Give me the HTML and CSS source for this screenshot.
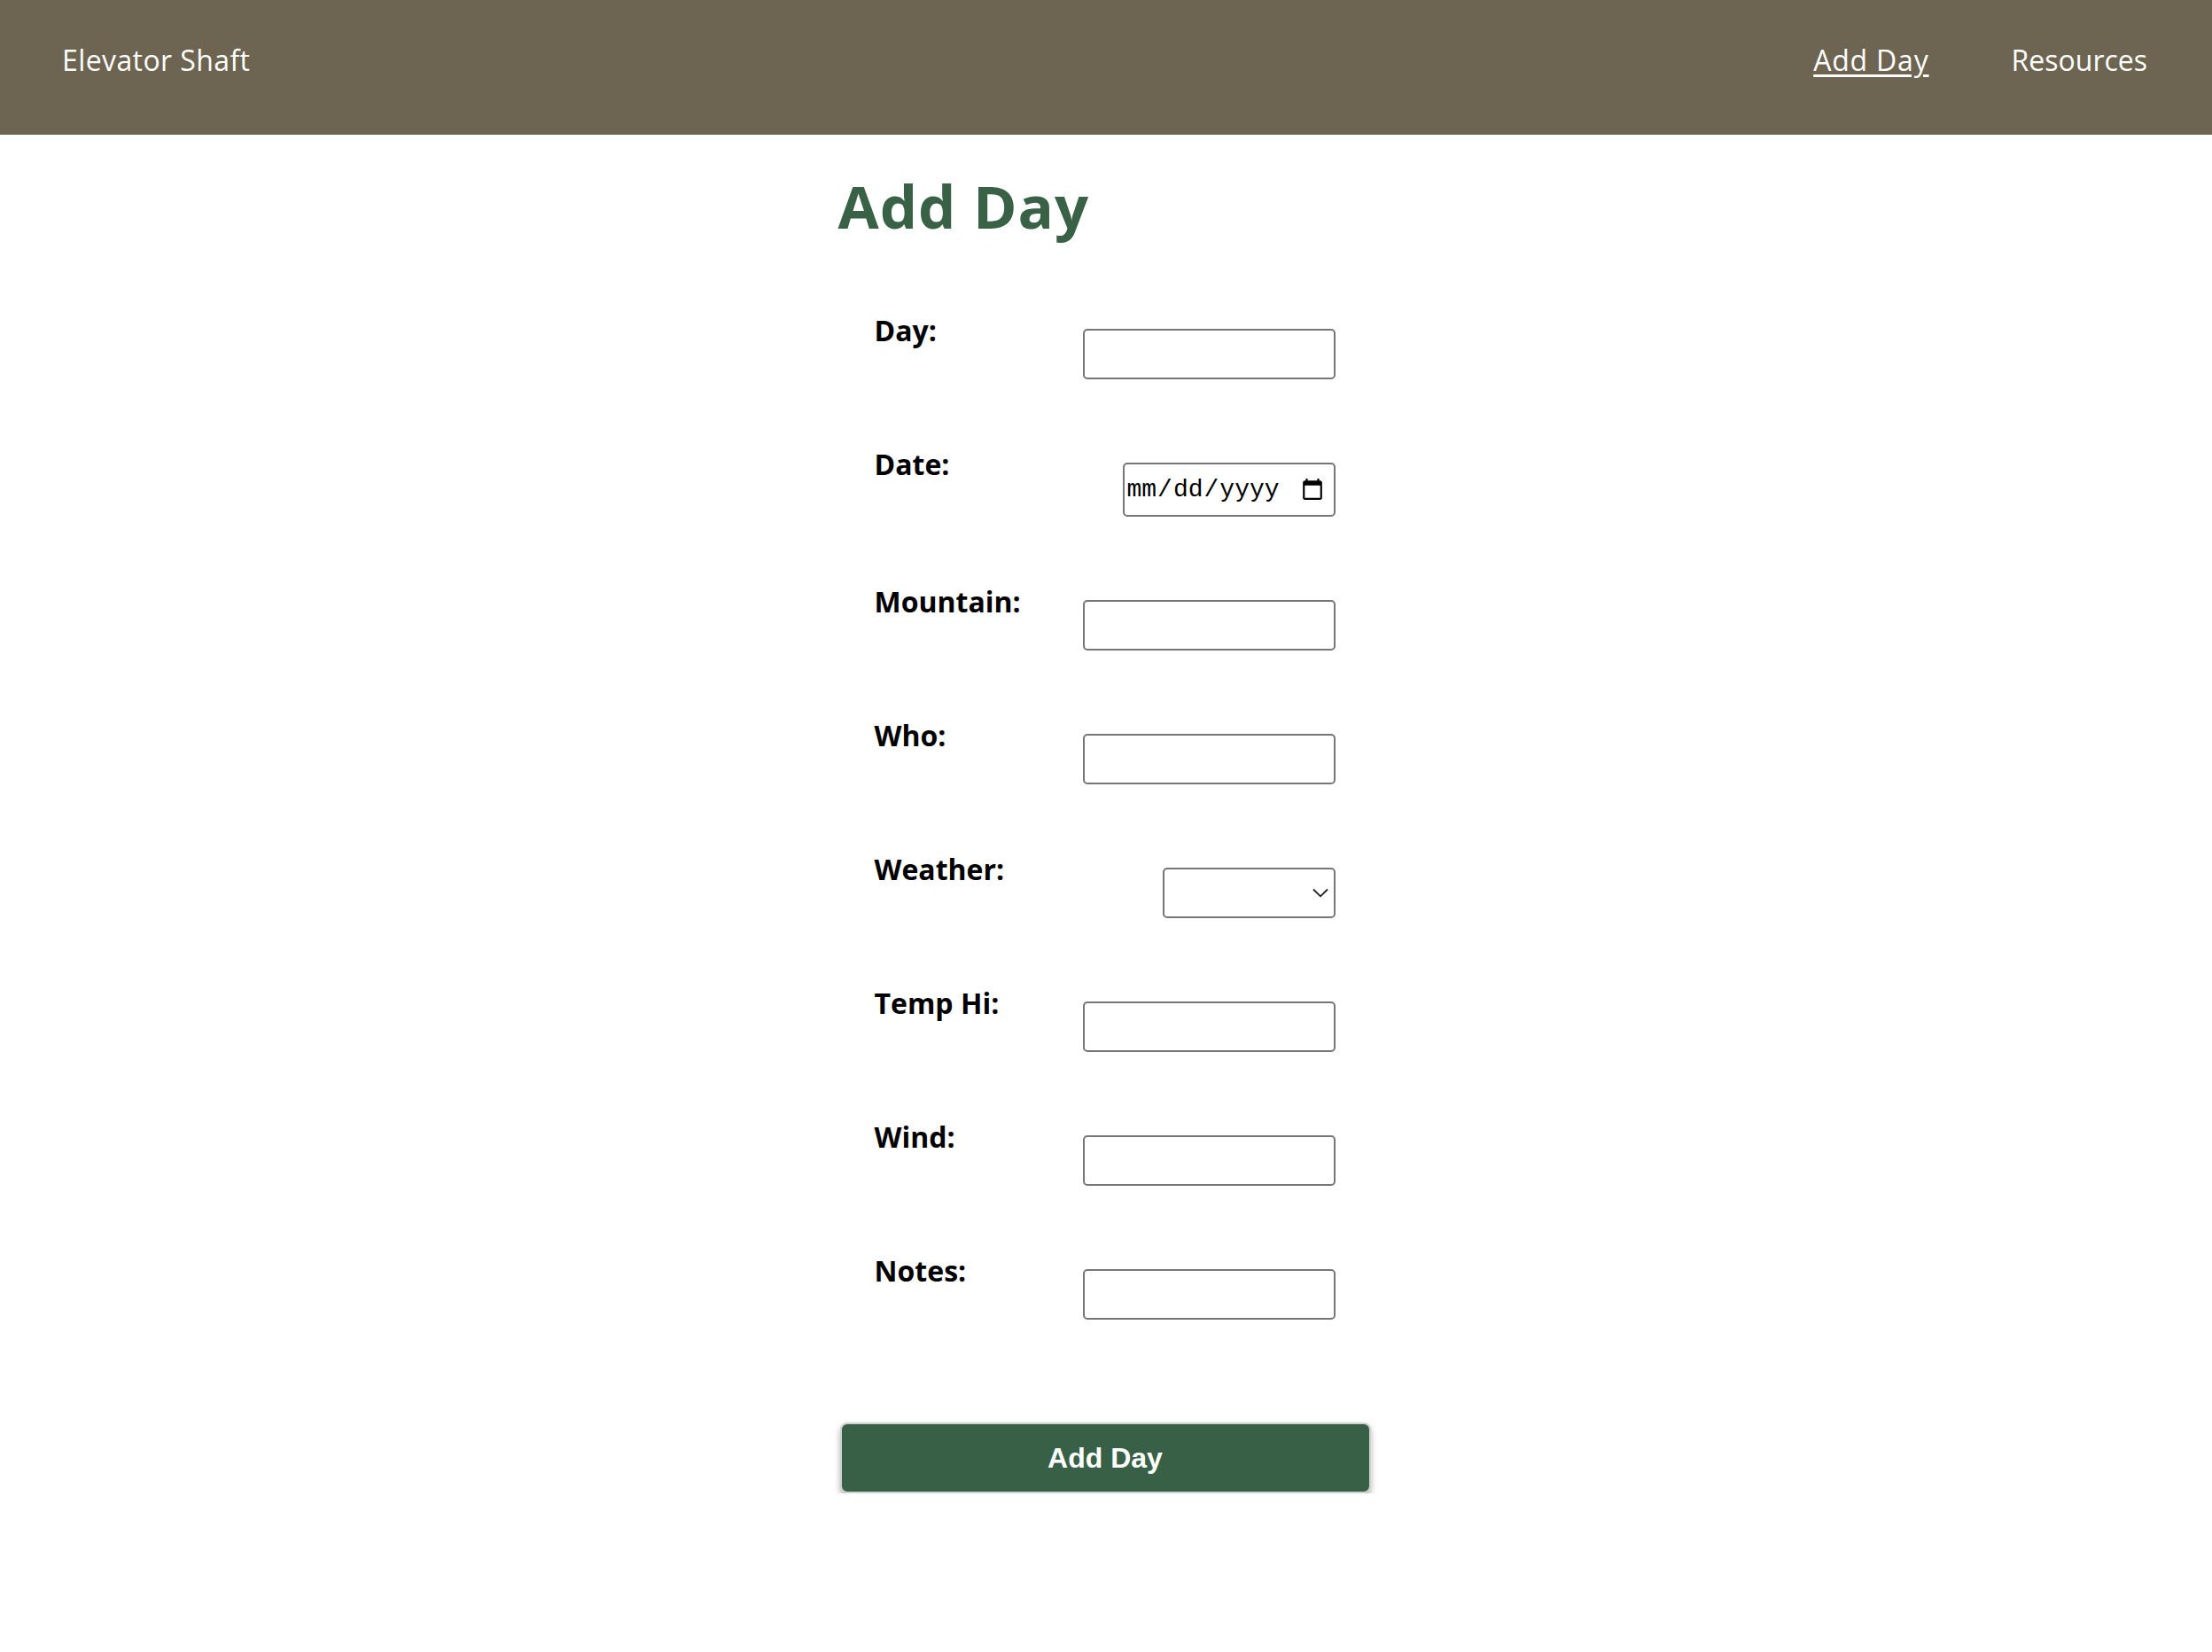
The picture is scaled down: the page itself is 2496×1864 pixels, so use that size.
FILE: index.html
```html
<!DOCTYPE html>
<html lang="en">
<head>
<meta charset="utf-8">
<title>Add Day - Elevator Shaft</title>
<link rel="stylesheet" href="styles.css">
</head>
<body>
<header class="topbar">
  <a class="brand" href="#">Elevator Shaft</a>
  <nav class="nav">
    <a class="nav-link active" href="#">Add Day</a>
    <a class="nav-link" href="#">Resources</a>
  </nav>
</header>
<main class="container">
  <h1 class="title">Add Day</h1>
  <form class="day-form">
    <div class="row">
      <label class="label" for="day">Day:</label>
      <input class="field" id="day" type="text">
    </div>
    <div class="row">
      <label class="label" for="date">Date:</label>
      <input class="field date" id="date" type="date">
    </div>
    <div class="row">
      <label class="label" for="mountain">Mountain:</label>
      <input class="field" id="mountain" type="text">
    </div>
    <div class="row">
      <label class="label" for="who">Who:</label>
      <input class="field" id="who" type="text">
    </div>
    <div class="row">
      <label class="label" for="weather">Weather:</label>
      <span class="select-wrap">
        <select class="field select" id="weather">
          <option></option>
        </select>
        <svg class="chevron" width="18" height="11" viewBox="0 0 18 11"><path d="M1 1.5 L9 9.3 L17 1.5" fill="none" stroke="#1e1e1e" stroke-width="1.8"/></svg>
      </span>
    </div>
    <div class="row">
      <label class="label" for="temphi">Temp Hi:</label>
      <input class="field" id="temphi" type="text">
    </div>
    <div class="row">
      <label class="label" for="wind">Wind:</label>
      <input class="field" id="wind" type="text">
    </div>
    <div class="row">
      <label class="label" for="notes">Notes:</label>
      <input class="field" id="notes" type="text">
    </div>
    <button class="submit" type="button">Add Day</button>
  </form>
</main>
</body>
</html>
```

FILE: styles.css
```css
html, body {
  margin: 0;
  padding: 0;
  background: #ffffff;
}

body {
  font-family: "Open Sans", "Liberation Sans", sans-serif;
  color: #000;
}

.topbar {
  height: 152px;
  box-sizing: border-box;
  padding: 46px 73px 0 70px;
  background: #6d6551;
  display: flex;
  justify-content: space-between;
  align-items: flex-start;
}

.brand {
  color: #ffffff;
  text-decoration: none;
  font-size: 32px;
  letter-spacing: 0.4px;
}

.nav {
  display: flex;
  gap: 93px;
}

.nav-link {
  color: #ffffff;
  text-decoration: none;
  font-size: 32px;
}

.nav-link.active {
  letter-spacing: 0.8px;
  text-decoration: underline;
  text-decoration-thickness: 3px;
  text-underline-offset: 4px;
}

.container {
  width: 599px;
  margin: 0 auto;
  padding-right: 2px;
}

.title {
  margin: 35px 0 0 -2px;
  font-size: 67px;
  font-weight: 700;
  color: #386146;
  line-height: 90px;
  letter-spacing: 1px;
}

.day-form {
  margin-top: 74px;
  display: flex;
  flex-direction: column;
}

.row {
  padding: 0 40px 74px 39px;
  display: flex;
  justify-content: space-between;
  align-items: flex-start;
}

.label {
  font-size: 32px;
  font-weight: 700;
  line-height: 44px;
}

.field {
  margin-top: 20px;
  width: 285px;
  height: 57px;
  box-sizing: border-box;
  border: 2px solid #767676;
  border-radius: 5px;
  background: #fff;
  padding: 2px 4px;
  font-size: 26px;
}

.field.date {
  width: 240px;
  height: 61px;
  padding: 0 8px 0 2px;
  font-family: "Liberation Mono", monospace;
  font-size: 28px;
}

.select-wrap {
  position: relative;
  display: block;
}

.field.select {
  width: 195px;
  appearance: none;
  -webkit-appearance: none;
}

.chevron {
  position: absolute;
  right: 8px;
  top: 43px;
}

.submit {
  margin-top: 42px;
  width: 599px;
  height: 80px;
  border: 2px solid #d2d2d2;
  border-radius: 8px;
  background: #386046;
  color: #fff;
  font-family: "Liberation Sans", Arial, sans-serif;
  font-weight: 700;
  font-size: 32px;
  box-shadow: 0 4px 7px rgba(0, 0, 0, 0.3);
}
```
